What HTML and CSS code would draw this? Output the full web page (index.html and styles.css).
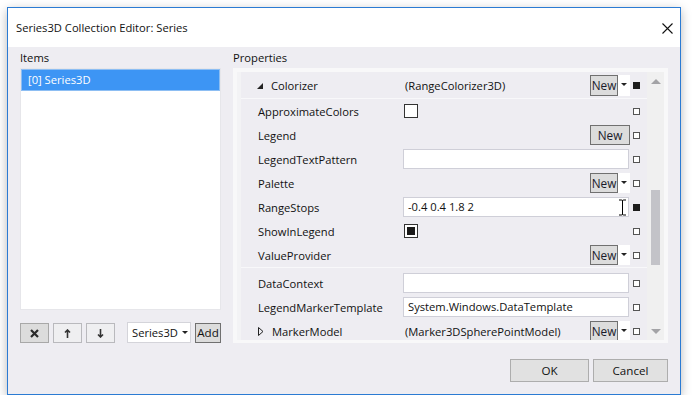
FILE: index.html
```html
<!DOCTYPE html>
<html>
<head>
<meta charset="utf-8">
<link rel="stylesheet" href="styles.css">
</head>
<body>
<div class="window">
  <div class="titlebar">
    <span class="title">Series3D Collection Editor: Series</span>
    <svg class="close" width="11" height="11" viewBox="0 0 11 11"><path d="M0.5 0.5 L10.5 10.5 M10.5 0.5 L0.5 10.5" stroke="#111" stroke-width="1.1" fill="none"/></svg>
  </div>
  <div class="content">
    <div class="main">
      <div class="left">
        <div class="label">Items</div>
        <div class="listbox">
          <div class="item sel">[0] Series3D</div>
        </div>
        <div class="toolbar">
          <div class="tbtn dark"><svg width="9" height="9" viewBox="0 0 9 9"><path d="M1 1 L8 8 M8 1 L1 8" stroke="#2a2a2a" stroke-width="2.2" fill="none"/></svg></div>
          <div class="tbtn"><svg width="7" height="9" viewBox="0 0 7 9"><path d="M3.5 1 V9 M1 3.5 L3.5 1 L6 3.5" stroke="#333" stroke-width="1.6" fill="none"/></svg></div>
          <div class="tbtn"><svg width="7" height="9" viewBox="0 0 7 9"><path d="M3.5 0 V8 M1 5.5 L3.5 8 L6 5.5" stroke="#333" stroke-width="1.6" fill="none"/></svg></div>
          <div class="combo"><span>Series3D</span><span class="caret"></span></div>
          <div class="addbtn">Add</div>
        </div>
      </div>
      <div class="right">
        <div class="label">Properties</div>
        <div class="panel">
          <div class="grid">
            <div class="row head">
              <div class="name exp"><span class="tri-down"></span>Colorizer</div>
              <div class="val"><span class="vtext">(RangeColorizer3D)</span><span class="newbtn tall">New</span><span class="drop tall"><span class="caret"></span></span></div>
              <div class="mk"><span class="sq fill"></span></div>
            </div>
            <div class="sep"></div>
            <div class="row">
              <div class="name">ApproximateColors</div>
              <div class="val"><span class="chk"></span></div>
              <div class="mk"><span class="sq"></span></div>
            </div>
            <div class="row">
              <div class="name">Legend</div>
              <div class="val"><span class="vtext"></span><span class="newbtn wide">New</span></div>
              <div class="mk"><span class="sq"></span></div>
            </div>
            <div class="row">
              <div class="name">LegendTextPattern</div>
              <div class="val"><span class="tbox"></span></div>
              <div class="mk"><span class="sq"></span></div>
            </div>
            <div class="row">
              <div class="name">Palette</div>
              <div class="val"><span class="vtext"></span><span class="newbtn">New</span><span class="drop"><span class="caret"></span></span></div>
              <div class="mk"><span class="sq"></span></div>
            </div>
            <div class="row">
              <div class="name">RangeStops</div>
              <div class="val"><span class="tbox">-0.4 0.4 1.8 2<svg class="ibeam" width="9" height="17" viewBox="0 0 9 17"><path d="M1 1 H3.5 Q4.5 1 4.5 2 V15 Q4.5 16 3.5 16 H1 M8 1 H5.5 Q4.5 1 4.5 2 M4.5 15 Q4.5 16 5.5 16 H8" stroke="#fff" stroke-width="2.6" fill="none"/><path d="M1 1 H3.5 Q4.5 1 4.5 2 V15 Q4.5 16 3.5 16 H1 M8 1 H5.5 Q4.5 1 4.5 2 M4.5 15 Q4.5 16 5.5 16 H8" stroke="#000" stroke-width="1" fill="none"/></svg></span></div>
              <div class="mk"><span class="sq fill"></span></div>
            </div>
            <div class="row">
              <div class="name">ShowInLegend</div>
              <div class="val"><span class="chk on"><span></span></span></div>
              <div class="mk"><span class="sq"></span></div>
            </div>
            <div class="row">
              <div class="name">ValueProvider</div>
              <div class="val"><span class="vtext"></span><span class="newbtn">New</span><span class="drop"><span class="caret"></span></span></div>
              <div class="mk"><span class="sq"></span></div>
            </div>
            <div class="sep"></div>
            <div class="gap"></div>
            <div class="row">
              <div class="name">DataContext</div>
              <div class="val"><span class="tbox"></span></div>
              <div class="mk"><span class="sq"></span></div>
            </div>
            <div class="row">
              <div class="name">LegendMarkerTemplate</div>
              <div class="val"><span class="tbox">System.Windows.DataTemplate</span></div>
              <div class="mk"><span class="sq"></span></div>
            </div>
            <div class="row">
              <div class="name exp"><span class="tri-right"><svg width="6" height="9" viewBox="0 0 6 9"><path d="M0.5 0.5 L5 4.5 L0.5 8.5 Z" stroke="#222" stroke-width="1" fill="none"/></svg></span>MarkerModel</div>
              <div class="val"><span class="vtext">(Marker3DSpherePointModel)</span><span class="newbtn">New</span><span class="drop"><span class="caret"></span></span></div>
              <div class="mk"><span class="sq"></span></div>
            </div>
          </div>
          <div class="scrollbar">
            <div class="sarrow"><span class="up"></span></div>
            <div class="thumb"></div>
            <div class="sarrow bottom"><span class="down"></span></div>
          </div>
        </div>
      </div>
    </div>
    <div class="footer">
      <div class="btn ok">OK</div>
      <div class="btn cancel">Cancel</div>
    </div>
  </div>
</div>
</body>
</html>
```
FILE: styles.css
```css
* { box-sizing: border-box; }
body {
  margin: 0;
  background: #ffffff;
  font-family: "Segoe UI", "Open Sans", "Noto Sans", sans-serif;
  font-size: 11.2px;
  color: #111;
}
.window {
  margin: 7px 0 0 7px;
  width: 674px;
  height: 388px;
  border: 1px solid #2b7bd3;
  background: #eeedf2;
  box-shadow: 0 3px 10px rgba(0, 0, 0, 0.28);
  display: flex;
  flex-direction: column;
}
.titlebar {
  height: 39px;
  background: #fff;
  display: flex;
  align-items: center;
  justify-content: space-between;
  padding: 0 7px 0 8px;
}
.title { font-size: 11.2px; }
.close { display: block; margin-top: 1px; }
.content {
  flex: 1;
  display: flex;
  flex-direction: column;
  padding: 0 12px 12px 12px;
}
.main { display: flex; gap: 12px; height: 296px; }
.left { width: 201px; display: flex; flex-direction: column; }
.right { width: 435px; display: flex; flex-direction: column; }
.label { height: 21px; line-height: 21px; }
.listbox {
  height: 243px;
  background: #fff;
  border: 1px solid #e6e6ea;
}
.item { height: 22px; line-height: 20px; padding-left: 6px; }
.item.sel { background: #3d95f4; color: #fff; border: 1px solid #8dbef3; }
.toolbar { margin-top: 12px; height: 21px; display: flex; align-items: flex-start; }
.tbtn {
  width: 29px; height: 20px; margin-top: 1px; margin-right: 4px;
  background: #efeff1; border: 1px solid #b9b9bd;
  display: flex; align-items: center; justify-content: center;
}
.tbtn.dark { background: #dcdcdc; border-color: #a8a8a8; }
.tbtn svg { display: block; }
.combo {
  margin-left: 8px;
  width: 64px; height: 21px;
  background: #fff; border: 1px solid #d4d4da;
  display: flex; align-items: center; padding-left: 4px;
}
.caret {
  display: inline-block; width: 0; height: 0;
  border-left: 3px solid transparent; border-right: 3px solid transparent;
  border-top: 3px solid #222;
}
.combo .caret { margin-left: 4px; }
.addbtn {
  margin-left: 4px; margin-top: 1px;
  width: 26px; height: 20px;
  background: #dcdcdc; border: 1px solid #707070;
  line-height: 18px; text-align: center; font-size: 11.6px;
}
.panel {
  height: 275px;
  border-style: solid; border-color: #f8f8f9;
  border-width: 4px 4px 3px 4px;
  display: flex;
  background: #eeedf2;
}
.grid {
  width: 410px;
  border-left: 4px solid #f3f3f5;
  overflow: hidden;
  display: flex; flex-direction: column;
}
.row { height: 24px; flex: none; display: flex; align-items: center; }
.row.head { height: 26px; }
.sep { height: 1px; flex: none; background: #f8f8fa; }
.gap { height: 3px; flex: none; }
.name { width: 162px; padding-left: 17px; white-space: nowrap; display: flex; align-items: center; }
.name.exp { padding-left: 16px; }
.tri-down {
  width: 0; height: 0; margin-right: 8px;
  border-left: 6px solid transparent; border-bottom: 6px solid #222;
  margin-top: 1px;
}
.tri-right { width: 6px; margin-right: 8px; margin-left: 1px; display: flex; }
.tri-right svg { display: block; }
.val { width: 227px; height: 100%; display: flex; align-items: center; }
.vtext { flex: 1; padding-left: 2px; white-space: nowrap; }
.newbtn {
  width: 28px; height: 20px;
  background: #dcdcdc; border: 1px solid #707070;
  font-size: 11.8px; line-height: 18px; text-align: center; color: #1a1a2a;
}
.newbtn.tall { height: 21px; line-height: 19px; }
.newbtn.wide { width: 40px; margin-right: 0; }
.drop {
  width: 12px; height: 20px; background: #fff;
  display: flex; align-items: center; justify-content: center;
}
.drop.tall { height: 21px; }
.drop .caret { margin-top: -2px; }
.tbox {
  position: relative;
  width: 226px; height: 20px;
  background: #fff; border: 1px solid #cfcfd8;
  padding-left: 4px; line-height: 18px; white-space: nowrap;
}
.ibeam { position: absolute; left: 214px; top: 1px; }
.chk {
  width: 14px; height: 14px; margin-left: 1px;
  background: #fff; border: 1px solid #333;
  padding: 2px;
}
.chk.on span { display: block; width: 8px; height: 8px; background: #1a1a1a; }
.mk { width: 17px; padding-left: 3px; display: flex; align-items: center; }
.sq { width: 7px; height: 7px; border: 1px solid #555; background: #fff; }
.sq.fill { background: #1c1c1c; border-color: #1c1c1c; }
.scrollbar {
  width: 17px;
  background: #f0f0f0;
  display: flex; flex-direction: column; align-items: center;
}
.sarrow { height: 17px; width: 17px; display: flex; justify-content: center; padding-top: 7px; }
.sarrow.bottom { margin-top: auto; padding-top: 6px; height: 17px; }
.up { width: 0; height: 0; border-left: 5px solid transparent; border-right: 5px solid transparent; border-bottom: 5px solid #a3a3a6; }
.down { width: 0; height: 0; border-left: 5px solid transparent; border-right: 5px solid transparent; border-top: 5px solid #a3a3a6; }
.thumb { width: 9px; height: 75px; margin-top: 101px; background: #c3c3c8; }
.footer { display: flex; justify-content: flex-end; gap: 4px; padding-top: 16px; }
.btn {
  height: 23px; background: #e1e1e1; border: 1px solid #adadad;
  text-align: center; line-height: 21px; font-size: 11.6px;
}
.btn.ok { width: 79px; }
.btn.cancel { width: 75px; }
```
